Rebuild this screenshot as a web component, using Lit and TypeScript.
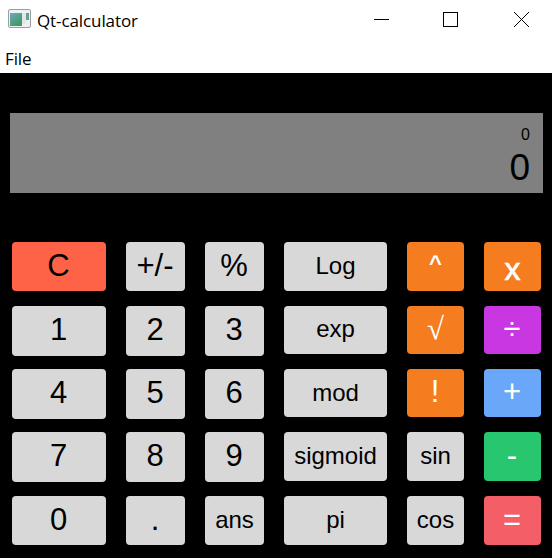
import { LitElement, html, css } from "lit";
import { customElement } from "lit/decorators.js";

type Key = [string, string];
const keys: Key[] = [
  ["C", "h49 big red"], ["+/-", "h49 big"], ["%", "h49 big"], ["Log", "h49 mid"], ["^", "h49 orange up"], ["x", "h49 orange times"],
  ["1", "h50 big"], ["2", "h50 big"], ["3", "h50 big"], ["exp", "h48 mid"], ["√", "h48 orange root"], ["÷", "h48 big purple"],
  ["4", "h50 big"], ["5", "h50 big"], ["6", "h50 big"], ["mod", "h48 mid low"], ["!", "h48 big orange"], ["+", "h48 big blue"],
  ["7", "h50 big"], ["8", "h50 big"], ["9", "h50 big"], ["sigmoid", "h49 mid"], ["sin", "h49 mid"], ["-", "h49 big green"],
  ["0", "h49 big"], [".", "h49 big"], ["ans", "h49 mid"], ["pi", "h49 mid"], ["cos", "h49 mid"], ["=", "h49 big coral"],
];

@customElement("app-root")
export class AppRoot extends LitElement {
  static styles = css`
    :host { display: block; width: 552px; height: 558px; background: #000; overflow: hidden; }
    .titlebar { height: 40px; background: #fff; display: flex; align-items: center; padding-left: 8px;
      font: 17px "Open Sans", "Noto Sans", sans-serif; color: #000; }
    .app-icon { width: 23px; height: 19px; margin-right: 6px; margin-top: -3px; display: block; }
    .title { flex: 1; letter-spacing: -0.1px; }
    .controls { display: flex; align-items: flex-start; height: 40px; }
    .ctl { display: block; width: 15px; height: 15px; margin-top: 12px; }
    .ctl.min { margin-right: 54px; }
    .ctl.max { margin-right: 56px; }
    .ctl.close { margin-right: 23px; }
    .menubar { height: 33px; background: #fff; padding-left: 5px; box-sizing: border-box;
      font: 17px/37px "Open Sans", "Noto Sans", sans-serif; color: #000; letter-spacing: -0.1px; }
    .display { margin: 40px 9px 0 10px; height: 80px; background: #808080; display: flex; flex-direction: column;
      align-items: flex-end; padding-right: 13px; box-sizing: border-box; font-family: "Liberation Sans", Arial, sans-serif; color: #000; }
    .small { font-size: 16px; line-height: 18px; margin-top: 13px; }
    .large { font-size: 37px; line-height: 42px; margin-top: 3px; }
    .keys { display: grid; margin: 49px 0 0 12px;
      grid-template-columns: 94px 59px 59px 103px 57px 57px;
      grid-template-rows: 64px 63px 63px 64px 49px; column-gap: 20px; }
    .key { border: 0; padding: 0 0 2px; margin: 0; border-radius: 4px; background: #d8d8d8; color: #000; box-sizing: border-box;
      font-family: "Liberation Sans", Arial, sans-serif; display: flex; align-items: center; justify-content: center; }
    .h48 { height: 48px; } .h49 { height: 49px; } .h50 { height: 50px; }
    .big { font-size: 31px; padding-right: 1px; }
    .mid { font-size: 24px; }
    .low { padding-bottom: 0; }
    .red { background: #ff6347; }
    .orange { background: #f57c1f; color: #fff; }
    .purple { background: #c837e1; color: #fff; }
    .blue { background: #6aa7f8; color: #fff; }
    .green { background: #28c76f; color: #fff; }
    .coral { background: #f45e67; color: #fff; }
    .up { font-size: 22px; font-weight: 700; padding-bottom: 5px; }
    .times { font-size: 32px; padding: 5px 0 0; -webkit-text-stroke: 0.7px #fff; }
    .root { font: 31px "Liberation Serif", serif; }
  `;

  render() {
    return html`
      <div class="titlebar">
        <svg class="app-icon" viewBox="0 0 23 19">
          <defs><linearGradient id="g" x1="0" y1="0" x2="0.6" y2="1"><stop offset="0" stop-color="#6fa8b8"/><stop offset="1" stop-color="#3f9a63"/></linearGradient></defs>
          <rect x="0.5" y="0.5" width="22" height="18" rx="1.5" fill="#eef0f2" stroke="#9a9ea3"/>
          <rect x="2" y="4" width="12" height="13" fill="url(#g)"/>
          <rect x="18" y="4" width="3" height="7" fill="#5fa58c"/>
          <rect x="14" y="4" width="4" height="11" fill="#e4e6e8"/>
        </svg>
        <span class="title">Qt-calculator</span>
        <div class="controls">
          <svg class="ctl min" viewBox="0 0 15 15"><path d="M0 7.5H15" stroke="#000" fill="none"/></svg>
          <svg class="ctl max" viewBox="0 0 15 15"><rect x="0.5" y="0.5" width="14" height="14" stroke="#000" fill="none"/></svg>
          <svg class="ctl close" viewBox="0 0 15 15"><path d="M0 0L15 15M15 0L0 15" stroke="#000" fill="none"/></svg>
        </div>
      </div>
      <div class="menubar">File</div>
      <div class="display">
        <div class="small">0</div>
        <div class="large">0</div>
      </div>
      <div class="keys">
        ${keys.map(([t, c]) => html`<button class="key ${c}">${t}</button>`)}
      </div>
    `;
  }
}
